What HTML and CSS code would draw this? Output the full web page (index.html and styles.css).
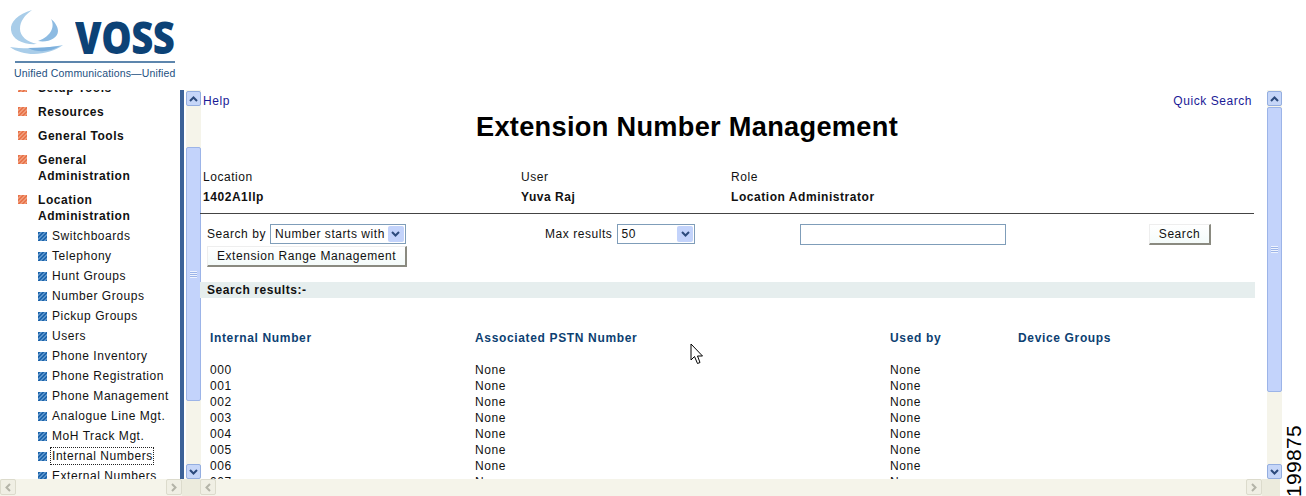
FILE: index.html
```html
<!DOCTYPE html>
<html lang="en">
<head>
<meta charset="utf-8">
<title>Extension Number Management</title>
<link rel="stylesheet" href="styles.css">
</head>
<body>
<div class="page">
  <div class="left-col">
    <header class="header">
      <div class="logo">
        <div class="logo-top">
          <svg class="swoosh" width="56" height="50" viewBox="10 8 56 50">
            <path d="M32 10C18 14 10 22 11 30C12 40 24 45 37 44C27 42 20 36 20 29C20 21 25 15 32 10Z" fill="#a9cde9"/>
            <path d="M51 19C55 26 52 36 38 41C48 43 58 38 58 31C58 27 55 22 51 19Z" fill="#8dbbe2"/>
            <path d="M10 47C22 49 44 49 63 45C50 55 25 58 10 47Z" fill="#a9cde9"/>
            <path d="M28 48C38 48 50 47 60 46C50 52 38 53 28 48Z" fill="#7db0dd"/>
          </svg>
          <span class="voss">VOSS</span>
        </div>
        <div class="logo-rule"></div>
        <div class="tagline">Unified Communications—Unified</div>
      </div>
    </header>
  </div>
  <main class="main">
    <nav class="sidebar">
      <ul class="menu">
        <li class="item clipped"><i class="ico"></i><span>Setup Tools</span></li>
        <li class="item"><i class="ico"></i><span>Resources</span></li>
        <li class="item"><i class="ico"></i><span>General Tools</span></li>
        <li class="item"><i class="ico"></i><span>General<br>Administration</span></li>
        <li class="item"><i class="ico"></i><span>Location<br>Administration</span></li>
      </ul>
      <ul class="submenu">
        <li><i class="ico blue"></i><span>Switchboards</span></li>
        <li><i class="ico blue"></i><span>Telephony</span></li>
        <li><i class="ico blue"></i><span>Hunt Groups</span></li>
        <li><i class="ico blue"></i><span>Number Groups</span></li>
        <li><i class="ico blue"></i><span>Pickup Groups</span></li>
        <li><i class="ico blue"></i><span>Users</span></li>
        <li><i class="ico blue"></i><span>Phone Inventory</span></li>
        <li><i class="ico blue"></i><span>Phone Registration</span></li>
        <li><i class="ico blue"></i><span>Phone Management</span></li>
        <li><i class="ico blue"></i><span>Analogue Line Mgt.</span></li>
        <li><i class="ico blue"></i><span>MoH Track Mgt.</span></li>
        <li><i class="ico blue"></i><span class="focused">Internal Numbers</span></li>
        <li><i class="ico blue"></i><span>External Numbers</span></li>
      </ul>
    </nav>
    <div class="divider"></div>
    <div class="vbar left-bar">
      <div class="sb-btn"><svg width="9" height="6" viewBox="0 0 9 6"><path d="M1 5L4.5 1.5L8 5" fill="none" stroke="#2c4a7c" stroke-width="2"/></svg></div>
      <div class="sb-track">
        <div class="sb-thumb"><span class="grip"></span></div>
      </div>
      <div class="sb-btn"><svg width="9" height="6" viewBox="0 0 9 6"><path d="M1 1L4.5 4.5L8 1" fill="none" stroke="#2c4a7c" stroke-width="2"/></svg></div>
    </div>
    <section class="content">
      <div class="top-links"><a>Help</a><a>Quick Search</a></div>
      <h1 class="title">Extension Number Management</h1>
      <div class="info">
        <div>Location</div><div>User</div><div>Role</div>
        <b>1402A1llp</b><b>Yuva Raj</b><b>Location Administrator</b>
      </div>
      <div class="rule"></div>
      <div class="search-row">
        <div class="cell-by"><label>Search by</label><div class="select sel-by"><span>Number starts with</span><i class="arrow"><svg width="9" height="6" viewBox="0 0 9 6"><path d="M1 1L4.5 4.5L8 1" fill="none" stroke="#2c4a7c" stroke-width="2"/></svg></i></div></div>
        <div class="cell-max"><label>Max results</label><div class="select sel-max"><span>50</span><i class="arrow"><svg width="9" height="6" viewBox="0 0 9 6"><path d="M1 1L4.5 4.5L8 1" fill="none" stroke="#2c4a7c" stroke-width="2"/></svg></i></div></div>
        <input class="query" type="text">
        <button class="btn btn-search" type="button">Search</button>
      </div>
      <button class="btn btn-range" type="button">Extension Range Management</button>
      <div class="results-bar">Search results:-</div>
      <div class="table">
        <div class="th">Internal Number</div><div class="th">Associated PSTN Number</div><div class="th">Used by</div><div class="th">Device Groups</div>
        <div class="gap"></div>
        <div>000</div><div>None</div><div>None</div><div></div>
        <div>001</div><div>None</div><div>None</div><div></div>
        <div>002</div><div>None</div><div>None</div><div></div>
        <div>003</div><div>None</div><div>None</div><div></div>
        <div>004</div><div>None</div><div>None</div><div></div>
        <div>005</div><div>None</div><div>None</div><div></div>
        <div>006</div><div>None</div><div>None</div><div></div>
        <div>007</div><div>None</div><div>None</div><div></div>
      </div>
      <svg class="cursor" width="14" height="22" viewBox="0 0 14 22"><path d="M1 1V17L4.5 13.5L7.5 20.5L10 19.5L7.5 13H12.5Z" fill="#fff" stroke="#000" stroke-width="1"/></svg>
    </section>
    <div class="vbar right-bar">
      <div class="sb-btn"><svg width="9" height="6" viewBox="0 0 9 6"><path d="M1 5L4.5 1.5L8 5" fill="none" stroke="#2c4a7c" stroke-width="2"/></svg></div>
      <div class="sb-track">
        <div class="sb-thumb"><span class="grip"></span></div>
      </div>
      <div class="sb-btn"><svg width="9" height="6" viewBox="0 0 9 6"><path d="M1 1L4.5 4.5L8 1" fill="none" stroke="#2c4a7c" stroke-width="2"/></svg></div>
    </div>
  </main>
  <div class="hbars">
    <div class="hbar hbar-left">
      <div class="hb-btn"><svg width="6" height="9" viewBox="0 0 6 9"><path d="M5 1L1.5 4.5L5 8" fill="none" stroke="#b4b4a8" stroke-width="2"/></svg></div>
      <div class="hb-btn"><svg width="6" height="9" viewBox="0 0 6 9"><path d="M1 1L4.5 4.5L1 8" fill="none" stroke="#b4b4a8" stroke-width="2"/></svg></div>
    </div>
    <div class="hbar hbar-right">
      <div class="hb-btn"><svg width="6" height="9" viewBox="0 0 6 9"><path d="M5 1L1.5 4.5L5 8" fill="none" stroke="#b4b4a8" stroke-width="2"/></svg></div>
      <div class="hb-btn"><svg width="6" height="9" viewBox="0 0 6 9"><path d="M1 1L4.5 4.5L1 8" fill="none" stroke="#b4b4a8" stroke-width="2"/></svg></div>
    </div>
  </div>
  <span class="figure-id">199875</span>
</div>
</body>
</html>
```

FILE: styles.css
```css
* { box-sizing: border-box; }
html, body { margin: 0; padding: 0; background: #fff; }
body { font: 12px/16px "Liberation Sans", Arial, sans-serif; color: #111; letter-spacing: 0.55px; overflow: hidden; }
ul { list-style: none; margin: 0; padding: 0; }
i { display: block; }

.page { width: 1306px; height: 496px; position: relative; overflow: hidden; display: flex; flex-direction: column; }

.header { height: 90px; padding: 8px 0 0 10px; }
.logo { width: 166px; }
.logo-top { display: flex; align-items: flex-start; height: 50px; }
.swoosh { flex: none; }
.voss { font: 800 44px/42px "Open Sans", "Liberation Sans", sans-serif; color: #0c4276; letter-spacing: -0.5px; margin: 8px 0 0 9px; transform: scaleX(.87); transform-origin: left; }
.logo-rule { height: 2px; background: #5d86ad; margin: 3px 0 0 5px; width: 160px; }
.tagline { font: 10.5px/14px "Liberation Sans", sans-serif; color: #23507f; margin: 3px 0 0 4px; letter-spacing: 0.15px; white-space: nowrap; }

.main { flex: none; height: 389px; display: flex; overflow: hidden; }

.sidebar { width: 180px; flex: none; overflow: hidden; }
.menu { margin-top: -10px; }
.item { display: flex; font-weight: bold; line-height: 16px; padding-left: 18px; margin-bottom: 8px; }
.item span { margin-left: 11px; }
.item .ico { margin-top: 3px; }
.item:nth-child(5) { margin-bottom: 2px; }
.ico { width: 9px; height: 9px; flex: none; background: repeating-linear-gradient(135deg, #e8744a 0 1.5px, #f09a78 1.5px 3px); }
.ico.blue { background: repeating-linear-gradient(135deg, #1e64aa 0 1.5px, #5a94cc 1.5px 3px); }
.submenu li { display: flex; height: 20px; align-items: center; padding-left: 38px; white-space: nowrap; }
.submenu span { margin-left: 5px; }
.focused { outline: 1px dotted #222; outline-offset: 0; line-height: 16px; margin-left: 4px !important; padding-left: 1px; }

.divider { width: 4px; flex: none; background: #3c6298; margin-left: 0; }
.vbar { width: 15px; flex: none; background: #f5f4ea; display: flex; flex-direction: column; padding-top: 1px; }
.left-bar { margin-left: 2px; margin-right: -1px; }
.right-bar { margin-left: 3px; }
.sb-btn { height: 15px; flex: none; background: #c6d6f8; border: 1px solid #94aee0; border-radius: 2px; display: flex; align-items: center; justify-content: center; }
.sb-track { flex: 1; display: flex; flex-direction: column; }
.sb-thumb { background: #c3d3fb; border: 1px solid #9cb4e8; border-radius: 2px; display: flex; align-items: center; justify-content: center; }
.left-bar .sb-thumb { margin-top: 41px; height: 254px; }
.right-bar .sb-thumb { margin-top: 1px; height: 285px; }
.grip { width: 7px; height: 7px; background: repeating-linear-gradient(#eef3fe 0 1px, #9cb4e8 1px 2px); }

.content { width: 1064px; flex: none; position: relative; overflow: hidden; padding: 3px 0 0; }
.top-links { display: flex; justify-content: space-between; padding: 0 12px 0 3px; color: #1a1a96; }
.title { font: bold 27.2px/32px "Liberation Sans", sans-serif; letter-spacing: 0.3px; text-align: center; margin: 2px 0 0; padding-right: 90px; color: #000; }
.info { display: grid; grid-template-columns: 318px 210px 1fr; grid-auto-rows: 20px; padding-left: 3px; margin-top: 26px; }
.rule { height: 1px; background: #444; width: 1054px; margin-top: 4px; }
.search-row { display: flex; align-items: center; height: 22px; margin-top: 9px; position: relative; }
.search-row label { margin-right: 4px; }
.cell-by { display: flex; align-items: center; width: 345px; padding-left: 7px; }
.cell-max { display: flex; align-items: center; width: 255px; }
.cell-max label { margin-right: 5px; }
.select { height: 20px; background: #fff; border: 1px solid #7f9db9; display: flex; align-items: center; justify-content: space-between; padding: 0 1px 0 4px; }
.sel-by { width: 136px; }
.sel-max { width: 78px; padding-left: 3px; }
.arrow { width: 16px; height: 16px; background: #c3d3fb; border-radius: 2px; display: flex; align-items: center; justify-content: center; }
.query { width: 206px; height: 21px; border: 1px solid #7f9db9; background: #fff; padding: 0; margin: 0; }
.btn { font: inherit; letter-spacing: inherit; color: #111; background: linear-gradient(#fff, #f4fbfa); border: 0; border-right: 2px solid #8a8a80; border-bottom: 2px solid #8a8a80; border-top: 1px solid #eee; border-left: 1px solid #eee; padding: 0; height: 21px; }
.btn-search { width: 62px; margin-left: 143px; }
.btn-range { display: block; width: 200px; margin: 1px 0 0 7px; }
.results-bar { height: 16px; background: #e6eeee; font-weight: bold; line-height: 17px; margin-top: 15px; padding-left: 7px; width: 1055px; }
.table { display: grid; grid-template-columns: 265px 415px 128px 1fr; grid-auto-rows: 16px; padding-left: 10px; margin-top: 32px; }
.th { font-weight: bold; color: #0d3f72; letter-spacing: 0.65px; }
.gap { grid-column: 1 / -1; }
.cursor { position: absolute; left: 490px; top: 253px; }

.figure-id { position: absolute; right: 2px; top: 425px; writing-mode: vertical-rl; transform: rotate(180deg); font: 21px/20px "Liberation Sans", sans-serif; letter-spacing: 0.3px; color: #000; }

.hbars { position: absolute; left: 0; top: 479px; width: 1280px; height: 17px; background: #ecebdd; display: flex; gap: 18px; align-items: stretch; padding-left: 0; }
.hbar { height: 17px; background: #f5f4ea; display: flex; justify-content: space-between; }
.hbar-left { width: 182px; }
.hbar-right { width: 1062px; margin-left: 0; }
.hb-btn { width: 16px; height: 16px; background: #f0efe4; border: 1px solid #dcdbcc; border-radius: 2px; display: flex; align-items: center; justify-content: center; }
```
